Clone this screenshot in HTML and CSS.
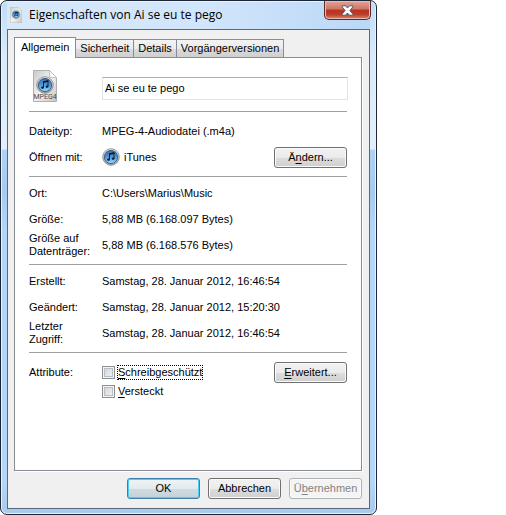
FILE: index.html
```html
<!DOCTYPE html>
<html lang="de">
<head>
<meta charset="utf-8">
<title>Eigenschaften von Ai se eu te pego</title>
<link rel="stylesheet" href="styles.css">
</head>
<body>
<svg class="defs" aria-hidden="true">
  <defs>
    <linearGradient id="disc" x1="0" y1="0" x2="0" y2="1">
      <stop offset="0" stop-color="#3a6ea8"/>
      <stop offset=".5" stop-color="#4a9ade"/>
      <stop offset="1" stop-color="#9adcff"/>
    </linearGradient>
    <linearGradient id="ring" x1="0" y1="0" x2="0" y2="1">
      <stop offset="0" stop-color="#e6e6e6"/>
      <stop offset="1" stop-color="#9c9fa4"/>
    </linearGradient>
    <linearGradient id="paper" x1="0" y1="0" x2="1" y2="1">
      <stop offset="0" stop-color="#c9c9c9"/>
      <stop offset=".5" stop-color="#f3f3f3"/>
      <stop offset="1" stop-color="#c4c4c4"/>
    </linearGradient>
    <symbol id="itunes" viewBox="0 0 18 18">
      <circle cx="9" cy="9" r="8.3" fill="url(#ring)" stroke="#85898e" stroke-width=".8"/>
      <circle cx="9" cy="9" r="6.6" fill="url(#disc)" stroke="#3d5672" stroke-width=".9"/>
      <path d="M7.500 11.500V5.800l4.500-1v5.700" fill="none" stroke="#0b1524" stroke-width=".9"/>
      <path d="M7 5.400l5.400-1.200v1.600L7 7z" fill="#0b1524"/>
      <ellipse cx="6.500" cy="11.700" rx="1.400" ry="1.100" fill="#0b1524"/>
      <ellipse cx="11.100" cy="10.700" rx="1.400" ry="1.100" fill="#0b1524"/>
    </symbol>
    <symbol id="sheet" viewBox="0 0 24 32">
      <path d="M.5.5h16l7 7v24H.5z" fill="url(#paper)" stroke="#b0b0b0"/>
      <path d="M16.500.5v7h7z" fill="#fafafa" stroke="#b8b8b8" stroke-width=".8"/>
      <use href="#itunes" x="3" y="6" width="18" height="18"/>
    </symbol>
  </defs>
</svg>
<main class="dialog">
  <header class="titlebar">
    <svg class="title-icon" aria-hidden="true"><use href="#sheet"/></svg>
    <h1 class="title">Eigenschaften von Ai se eu te pego</h1>
    <button class="close" type="button" aria-label="Schließen">
      <svg viewBox="0 0 13 11" width="13" height="11" aria-hidden="true">
        <path d="M1 .8h3.600L6.500 3 8.400.8H12v1L8.900 5.500 12 9.200v1H8.400L6.500 8 4.600 10.200H1v-1L4.100 5.500 1 1.800z" fill="#fff" stroke="#525a70"/>
      </svg>
    </button>
  </header>
  <form class="client">
    <div class="tabs" role="tablist">
      <button class="tab tab-active" type="button" role="tab" aria-selected="true">Allgemein</button>
      <button class="tab" type="button" role="tab">Sicherheit</button>
      <button class="tab" type="button" role="tab">Details</button>
      <button class="tab" type="button" role="tab">Vorgängerversionen</button>
    </div>
    <div class="panel" role="tabpanel">
      <div class="section row name-row">
        <span class="file-icon">
          <svg width="24" height="32" aria-hidden="true"><use href="#sheet"/></svg>
          <span class="file-type">MPEG4</span>
        </span>
        <input class="name" type="text" value="Ai se eu te pego" aria-label="Dateiname">
      </div>
      <div class="section section-type">
        <div class="row"><span>Dateityp:</span><span>MPEG-4-Audiodatei (.m4a)</span></div>
        <div class="row">
          <span>Öffnen mit:</span>
          <span class="app">
            <svg width="18" height="18" aria-hidden="true"><use href="#itunes"/></svg>
            <span>iTunes</span>
            <button class="btn push" type="button">Ä<u>n</u>dern...</button>
          </span>
        </div>
      </div>
      <div class="section">
        <div class="row"><span>Ort:</span><span>C:\Users\Marius\Music</span></div>
        <div class="row"><span>Größe:</span><span>5,88 MB (6.168.097 Bytes)</span></div>
        <div class="row"><span>Größe auf Datenträger:</span><span>5,88 MB (6.168.576 Bytes)</span></div>
      </div>
      <div class="section">
        <div class="row"><span>Erstellt:</span><span>Samstag, 28. Januar 2012, 16:46:54</span></div>
        <div class="row"><span>Geändert:</span><span>Samstag, 28. Januar 2012, 15:20:30</span></div>
        <div class="row"><span>Letzter<br>Zugriff:</span><span>Samstag, 28. Januar 2012, 16:46:54</span></div>
      </div>
      <div class="section row attributes">
        <span class="attr-label">Attribute:</span>
        <div class="checks">
          <label class="check"><input type="checkbox"><span class="focused"><u>S</u>chreibgeschützt</span></label>
          <label class="check"><input type="checkbox"><span><u>V</u>ersteckt</span></label>
        </div>
        <button class="btn push" type="button"><u>E</u>rweitert...</button>
      </div>
    </div>
    <footer class="actions">
      <button class="btn btn-default" type="button">OK</button>
      <button class="btn" type="button">Abbrechen</button>
      <button class="btn" type="button" disabled>Ü<u>b</u>ernehmen</button>
    </footer>
  </form>
</main>
</body>
</html>
```
FILE: styles.css
```css
* { box-sizing: border-box; }

body {
  margin: 0;
  background: #fff;
  color: #000;
  font: 11px/13px "Liberation Sans", Arial, sans-serif;
}

u { text-underline-offset: 2px; text-decoration-skip-ink: none; }

.defs { position: absolute; width: 0; height: 0; }

.dialog {
  display: flex;
  flex-direction: column;
  max-width: 377px;
  min-height: 100vh;
  padding: 0 6px 5px;
  border: 1px solid #1c2636;
  border-radius: 7px;
  box-shadow: inset 0 0 0 1px #e4f3ff;
  background: linear-gradient(#c2dcf6 0, #d9eafb 55px, #e3effa 148px, #afd2f7 149px, #a6cbf1 190px, #b4d6f8 230px, #b4d6f8 480px, #a9c9ea 100%);
}

.titlebar {
  display: flex;
  align-items: center;
  height: 28px;
  padding-left: 3px;
  background: linear-gradient(90deg, #d7e8fa, #d1e5fb 55%, #bad8f7);
  box-shadow: inset 0 1px 0 #e4f3ff;
}

.title-icon { width: 12px; height: 16px; }

.title {
  flex: 1;
  margin: 0 0 0 7px;
  font: 12px/16px "Open Sans", "Noto Sans", sans-serif;
}

.close {
  align-self: flex-start;
  display: flex;
  align-items: center;
  justify-content: center;
  width: 47px;
  height: 19px;
  margin-right: -1px;
  padding: 0;
  border: 1px solid #5b2a2c;
  border-top: 0;
  border-radius: 0 0 5px 5px;
  box-shadow: inset 0 0 0 1px #edb9ae;
  background: linear-gradient(#e5a398, #cf7566 45%, #b8331d 50%, #b8402c 75%, #d88b69);
}

.client {
  flex: 1;
  display: flex;
  flex-direction: column;
  padding: 7px 7px 9px 6px;
  border: 1px solid #58697b;
  background: #f0f0f0;
}

.tabs { display: flex; align-items: flex-end; }

.tab {
  height: 18px;
  margin-left: -1px;
  padding: 0 4px;
  border: 1px solid #898c95;
  border-bottom: 0;
  background: linear-gradient(#f3f3f3, #ebebeb 50%, #dcdcdc 51%, #cfcfcf);
  color: inherit;
  font: inherit;
}

.tab-active {
  height: 21px;
  margin: 0 0 -1px;
  padding: 0 6px 2px;
  background: #fff;
  z-index: 1;
}

.panel {
  flex: 1;
  padding: 14px;
  border: 1px solid #898c95;
  box-shadow: 1px 1px 0 #fff;
  background: #fff;
}

.section {
  padding: 3px 0 6px;
  border-bottom: 1px solid #a0a0a0;
}

.section-type { padding-top: 6px; }

.row {
  display: grid;
  grid-template-columns: 73px 1fr;
  align-items: center;
  min-height: 26px;
}

.name-row {
  margin-top: -2px;
  padding: 0 0 9px;
}

.file-icon {
  position: relative;
  width: 24px;
  height: 32px;
  margin-left: 4px;
}

.file-icon svg { display: block; }

.file-type {
  position: absolute;
  inset: auto 0 1px;
  color: #4b4b4b;
  font: 7px/7px Roboto, sans-serif;
  text-align: center;
}

.name {
  height: 23px;
  margin: 5px -1px 0 0;
  padding: 0 2px 2px;
  border: 1px solid #e2e3ea;
  border-top-color: #abadb3;
  border-radius: 1px;
  font: inherit;
}

.app { display: flex; align-items: center; gap: 4px; }

.btn {
  width: 73px;
  height: 21px;
  padding: 0;
  border: 1px solid #707070;
  border-radius: 3px;
  box-shadow: inset 0 0 0 1px #fbfbfb;
  background: linear-gradient(#f2f2f2, #ebebeb 50%, #dddddd 51%, #cfcfcf);
  color: inherit;
  font: inherit;
}

.btn-default {
  border-color: #3c7fb1;
  box-shadow: inset 0 0 0 1px #48d0f7;
  background: linear-gradient(#eff3f5, #e3eaee 50%, #d0dae1 51%, #c5d1d9);
}

.btn:disabled {
  border-color: #adb2b5;
  background: #f4f4f4;
  color: #838383;
}

.push { margin-left: auto; }

.attributes {
  grid-template-columns: 73px 1fr auto;
  align-items: start;
  padding: 9px 0 0;
  border: 0;
}

.attr-label { margin-top: 4px; }

.checks {
  display: grid;
  gap: 4px;
  margin-top: 3px;
}

.check {
  display: flex;
  align-items: center;
  gap: 2px;
  height: 15px;
}

.check span { border: 1px solid transparent; }
.check .focused { border: 1px dotted #000; }

.check input {
  appearance: none;
  width: 13px;
  height: 13px;
  margin: 0;
  border: 1px solid #8e8f8f;
  box-shadow: inset 0 0 0 1px #f4f4f4, inset 0 0 0 2px #b9bec4;
  background: linear-gradient(135deg, #cbcfd5, #f6f6f6);
}

.actions {
  display: flex;
  justify-content: flex-end;
  gap: 8px;
  padding-top: 7px;
}
```
